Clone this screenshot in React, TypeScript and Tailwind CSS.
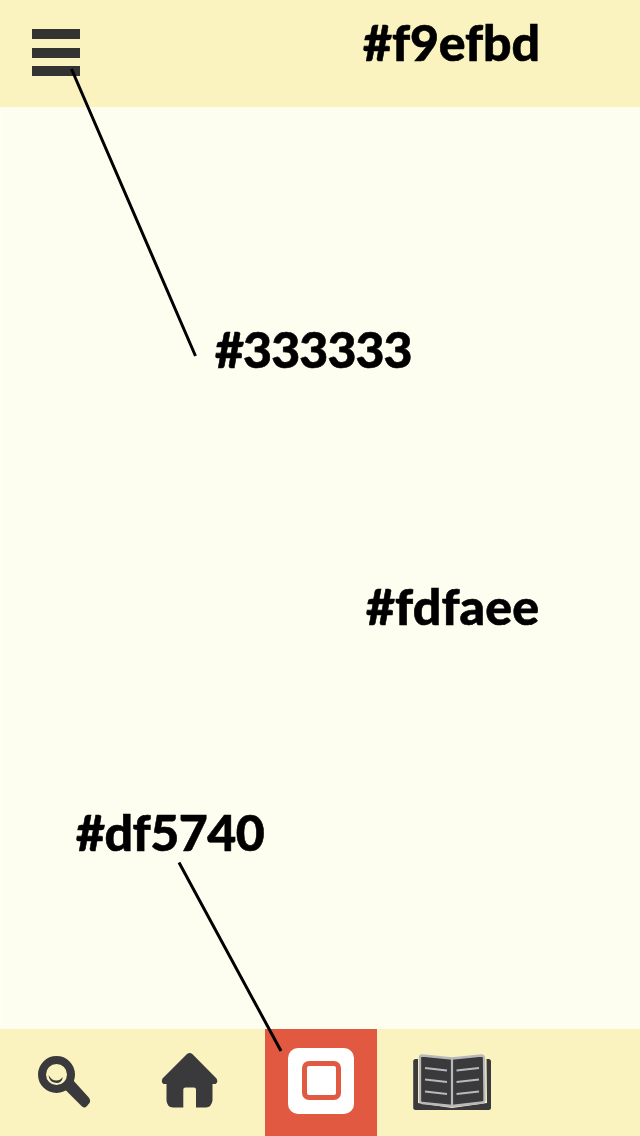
import type { ReactNode } from "react";

function Swatch({ children, className }: { children: ReactNode; className: string }) {
  return (
    <p className={`h-[60px] w-fit whitespace-nowrap font-['Lato',sans-serif] text-[50px] leading-[60px] font-black text-black [-webkit-text-stroke:0.6px_black] ${className}`}>
      {children}
    </p>
  );
}

function SearchIcon() {
  return (
    <svg className="h-[107px] w-[128px]" viewBox="0 1029 128 107" fill="none">
      <path d="M67 1084 L72 1079 L88.800 1097.500 Q91 1100.500 89.500 1103 L86.500 1106.500 Q84.500 1108.500 82 1106.500 L64.500 1089Z" fill="#3a3a3c" />
      <circle cx="56.500" cy="1074.500" r="14.500" stroke="#3a3a3c" strokeWidth="8" />
      <path d="M48.500 1075 Q49 1082.500 56.500 1083 Q62 1083 62.800 1077 Q60 1080.500 56.500 1080.500 Q51.500 1080.500 48.500 1075Z" fill="#3a3a3c" />
    </svg>
  );
}

function HomeIcon() {
  return (
    <svg className="h-[107px] w-[137px]" viewBox="128 1029 137 107">
      <path d="M187 1054 Q189.700 1051.800 192.300 1054 L216.500 1078.500 Q218.500 1082 215.500 1084 H212.500 V1100.500 Q211.500 1107 206 1107.500 H196 V1089.500 Q196 1087.500 194 1087.500 H185.500 Q183.300 1087.500 183.300 1089.500 V1107.500 H173 Q167 1107 166.500 1100.500 V1084 H163.500 Q160.800 1082 162.500 1078.500Z" fill="#3a3a3c" />
    </svg>
  );
}

function BookIcon() {
  return (
    <svg className="h-[107px] w-[150px]" viewBox="377 1029 150 107">
      <rect x="413.200" y="1059" width="77.800" height="51" rx="2.500" fill="#3a3a3c" />
      <path d="M418 1055 L423 1053.500 L452 1057 L482 1053.500 L486.500 1056 L487 1103 L452 1108 L418 1103Z" fill="#faf2bf" />
      <path d="M422.500 1055.500 L452 1058.500 L481.500 1055.500 Q483.800 1055.500 484 1058 L484.500 1100 Q484.500 1102 482.500 1102.500 L452 1106 L422 1103 Q420 1102.500 420 1100.500 V1057.500 Q420 1055.500 422.500 1055.500Z" fill="#3a3a3c" stroke="#b9b9bb" strokeWidth="2.300" />
      <path d="M452 1058.500 V1106 M425 1068 L447 1070.500 M425 1079.500 L447 1082 M425 1091.500 L447 1094 M456.500 1070.500 L479 1068 M456.500 1082 L479 1079.500 M456.500 1094 L479 1091.500" stroke="#b9b9bb" strokeWidth="2.200" />
    </svg>
  );
}

export default function App() {
  return (
    <div className="relative flex h-[1136px] w-[640px] flex-col overflow-hidden bg-[#fefef0]">
      <header className="flex h-[107px] shrink-0 items-start justify-between bg-[#faf2bf]">
        <button aria-label="Menu" className="mt-[29px] ml-[32px] flex w-[48px] flex-col gap-[8.500px]">
          <span className="h-[10px] bg-[#333331]" />
          <span className="h-[10px] bg-[#333331]" />
          <span className="h-[10px] bg-[#333331]" />
        </button>
        <Swatch className="mt-[12px] mr-[100px] tracking-[-0.1px]">#f9efbd</Swatch>
      </header>
      <main className="flex flex-1 flex-col border-l border-[#fffff8]">
        <Swatch className="mt-[212px] ml-[214px] tracking-[-0.9px]">#333333</Swatch>
        <Swatch className="mt-[197px] ml-[365px] tracking-[0.1px]">#fdfaee</Swatch>
        <Swatch className="mt-[166px] ml-[75px] tracking-[-0.5px]">#df5740</Swatch>
      </main>
      <nav className="flex h-[107px] shrink-0 bg-[#faf2bf]">
        <button aria-label="Search"><SearchIcon /></button>
        <button aria-label="Home"><HomeIcon /></button>
        <button aria-label="Capture" className="flex w-[112px] items-start justify-center bg-[#e15941]">
          <span className="mt-[18.500px] flex size-[66px] items-center justify-center rounded-[10px] bg-white">
            <span className="size-[39px] rounded-[7px] border-[5.500px] border-[#e15941]" />
          </span>
        </button>
        <button aria-label="Library"><BookIcon /></button>
      </nav>
      <svg className="pointer-events-none absolute inset-0 h-[1136px] w-[640px]" viewBox="0 0 640 1136">
        <path d="M71.500 69 L195.500 356 M179 862.500 L281 1051" stroke="#000" strokeWidth="3" fill="none" />
      </svg>
    </div>
  );
}
